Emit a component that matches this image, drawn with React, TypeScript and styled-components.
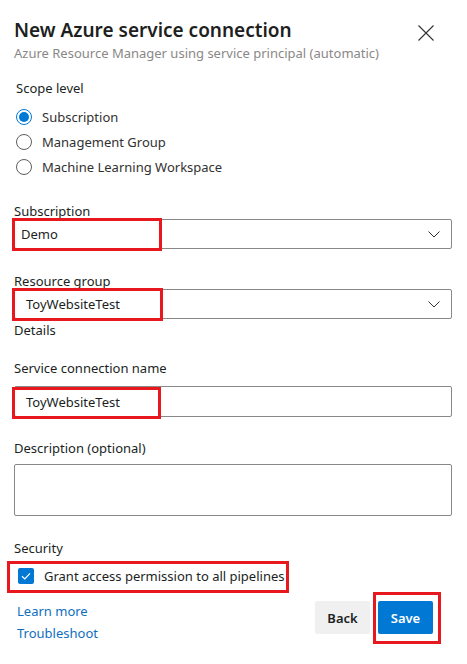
import React from 'react';
import styled, { createGlobalStyle } from 'styled-components';

const Global = createGlobalStyle`
  html, body { margin: 0; padding: 0; background: #ffffff; }
  body {
    font-family: "Noto Sans", "Open Sans", sans-serif;
    color: #201f1e;
    -webkit-font-smoothing: antialiased;
  }
  * { box-sizing: border-box; }
`;

const FONT = `"Noto Sans", "Open Sans", sans-serif`;

const Panel = styled.div`
  position: relative;
  width: 467px;
  height: 664px;
  padding: 17px 15px 0 14px;
  display: flex;
  flex-direction: column;
  overflow: hidden;
  font-family: ${FONT};
`;

const Header = styled.div`
  display: flex;
  justify-content: space-between;
  align-items: flex-start;
`;

const TitleBlock = styled.div`
  display: flex;
  flex-direction: column;
`;

const Title = styled.h1`
  margin: 0;
  font-size: 19px;
  line-height: 26px;
  font-weight: 600;
  color: #201f1e;
`;

const Subtitle = styled.div`
  font-size: 13px;
  line-height: 20px;
  color: #8a8886;
`;

const CloseButton = styled.button`
  margin: 8px 18px 0 0;
  width: 16px;
  height: 16px;
  padding: 0;
  border: none;
  background: none;
  display: flex;
  color: #323130;
`;

const SectionLabel = styled.div<{ $mt: number; $pl?: number }>`
  margin-top: ${(p) => p.$mt}px;
  padding-left: ${(p) => p.$pl ?? 0}px;
  font-size: 13px;
  line-height: 16px;
  color: #201f1e;
`;

const RadioGroup = styled.div`
  margin-top: 8px;
  display: flex;
  flex-direction: column;
`;

const RadioRow = styled.label`
  height: 25px;
  display: flex;
  align-items: center;
  gap: 10px;
  padding-left: 2px;
  font-size: 13px;
  color: #323130;
`;

const RadioCircle = styled.span<{ $checked?: boolean }>`
  width: 16px;
  height: 16px;
  border-radius: 50%;
  border: 1px solid ${(p) => (p.$checked ? '#0078d4' : '#605e5c')};
  display: flex;
  align-items: center;
  justify-content: center;
  &::after {
    content: '';
    display: ${(p) => (p.$checked ? 'block' : 'none')};
    width: 10px;
    height: 10px;
    border-radius: 50%;
    background: #0078d4;
  }
`;

const FieldWrap = styled.div<{ $mt: number }>`
  position: relative;
  margin-top: ${(p) => p.$mt}px;
  width: 438px;
`;

const Box = styled.div<{ $h: number; $pl: number }>`
  height: ${(p) => p.$h}px;
  border: 1px solid #8a8886;
  border-radius: 2px;
  display: flex;
  align-items: center;
  justify-content: space-between;
  padding: 0 11px 0 ${(p) => p.$pl}px;
  font-size: 13px;
  color: #201f1e;
`;

const Highlight = styled.div<{ $l: number; $t: number; $w: number; $h: number }>`
  position: absolute;
  left: ${(p) => p.$l}px;
  top: ${(p) => p.$t}px;
  width: ${(p) => p.$w}px;
  height: ${(p) => p.$h}px;
  border: 3px solid #e8191e;
  pointer-events: none;
`;

const CheckRow = styled.div`
  position: relative;
  margin-top: 10px;
  height: 20px;
  display: flex;
  align-items: center;
  gap: 10px;
  padding-left: 4px;
  font-size: 13px;
  color: #201f1e;
`;

const CheckBox = styled.span`
  width: 16px;
  height: 16px;
  border-radius: 2px;
  background: #0078d4;
  display: flex;
  align-items: center;
  justify-content: center;
`;

const Footer = styled.div`
  margin-top: 15px;
  display: flex;
  justify-content: space-between;
  align-items: flex-start;
`;

const Links = styled.div`
  display: flex;
  flex-direction: column;
  gap: 2px;
  padding-left: 3px;
`;

const Link = styled.a`
  font-size: 13px;
  line-height: 20px;
  color: #106ebe;
  text-decoration: none;
`;

const Buttons = styled.div`
  display: flex;
  gap: 8px;
  margin-right: 19px;
`;

const ButtonWrap = styled.div`
  position: relative;
`;

const Button = styled.button<{ $primary?: boolean }>`
  width: 55px;
  height: 33px;
  border: none;
  border-radius: 2px;
  font-family: ${FONT};
  font-size: 13px;
  font-weight: 600;
  background: ${(p) => (p.$primary ? '#0078d4' : '#f0f0f0')};
  color: ${(p) => (p.$primary ? '#ffffff' : '#201f1e')};
  padding: 0;
`;

const Chevron = () => (
  <svg width="12" height="7" viewBox="0 0 12 7" fill="none">
    <path d="M0.5 0.5 L6 6 L11.5 0.5" stroke="#323130" strokeWidth="1" />
  </svg>
);

export default function App() {
  return (
    <>
      <Global />
      <Panel>
        <Header>
          <TitleBlock>
            <Title>New Azure service connection</Title>
            <Subtitle>Azure Resource Manager using service principal (automatic)</Subtitle>
          </TitleBlock>
          <CloseButton aria-label="Close">
            <svg width="16" height="16" viewBox="0 0 16 16" fill="none">
              <path d="M0.5 0.5 L15.5 15.5 M15.5 0.5 L0.5 15.5" stroke="#323130" strokeWidth="1.1" />
            </svg>
          </CloseButton>
        </Header>

        <SectionLabel $mt={17} $pl={2}>Scope level</SectionLabel>
        <RadioGroup>
          <RadioRow>
            <RadioCircle $checked />
            Subscription
          </RadioRow>
          <RadioRow>
            <RadioCircle />
            Management Group
          </RadioRow>
          <RadioRow>
            <RadioCircle />
            Machine Learning Workspace
          </RadioRow>
        </RadioGroup>

        <SectionLabel $mt={24}>Subscription</SectionLabel>
        <FieldWrap $mt={0}>
          <Box $h={30} $pl={6}>
            <span>Demo</span>
            <Chevron />
          </Box>
          <Highlight $l={-2} $t={-1} $w={150} $h={33} />
        </FieldWrap>

        <SectionLabel $mt={24}>Resource group</SectionLabel>
        <FieldWrap $mt={0}>
          <Box $h={30} $pl={11}>
            <span>ToyWebsiteTest</span>
            <Chevron />
          </Box>
          <Highlight $l={-2} $t={-1} $w={151} $h={33} />
        </FieldWrap>

        <SectionLabel $mt={3}>Details</SectionLabel>

        <SectionLabel $mt={22}>Service connection name</SectionLabel>
        <FieldWrap $mt={10}>
          <Box $h={31} $pl={11}>
            <span>ToyWebsiteTest</span>
          </Box>
          <Highlight $l={-2} $t={1} $w={149} $h={32} />
        </FieldWrap>

        <SectionLabel $mt={23}>Description (optional)</SectionLabel>
        <FieldWrap $mt={8}>
          <Box $h={52} $pl={11} />
        </FieldWrap>

        <SectionLabel $mt={24}>Security</SectionLabel>
        <CheckRow>
          <CheckBox>
            <svg width="12" height="12" viewBox="0 0 12 12" fill="none">
              <path d="M2 6.3 L4.8 9 L10 3.3" stroke="#ffffff" strokeWidth="1.2" />
            </svg>
          </CheckBox>
          Grant access permission to all pipelines
          <Highlight $l={-7} $t={-5} $w={282} $h={32} />
        </CheckRow>

        <Footer>
          <Links>
            <Link href="#">Learn more</Link>
            <Link href="#">Troubleshoot</Link>
          </Links>
          <Buttons>
            <Button>Back</Button>
            <ButtonWrap>
              <Button $primary>Save</Button>
              <Highlight $l={-5} $t={-9} $w={68} $h={52} />
            </ButtonWrap>
          </Buttons>
        </Footer>
      </Panel>
    </>
  );
}
